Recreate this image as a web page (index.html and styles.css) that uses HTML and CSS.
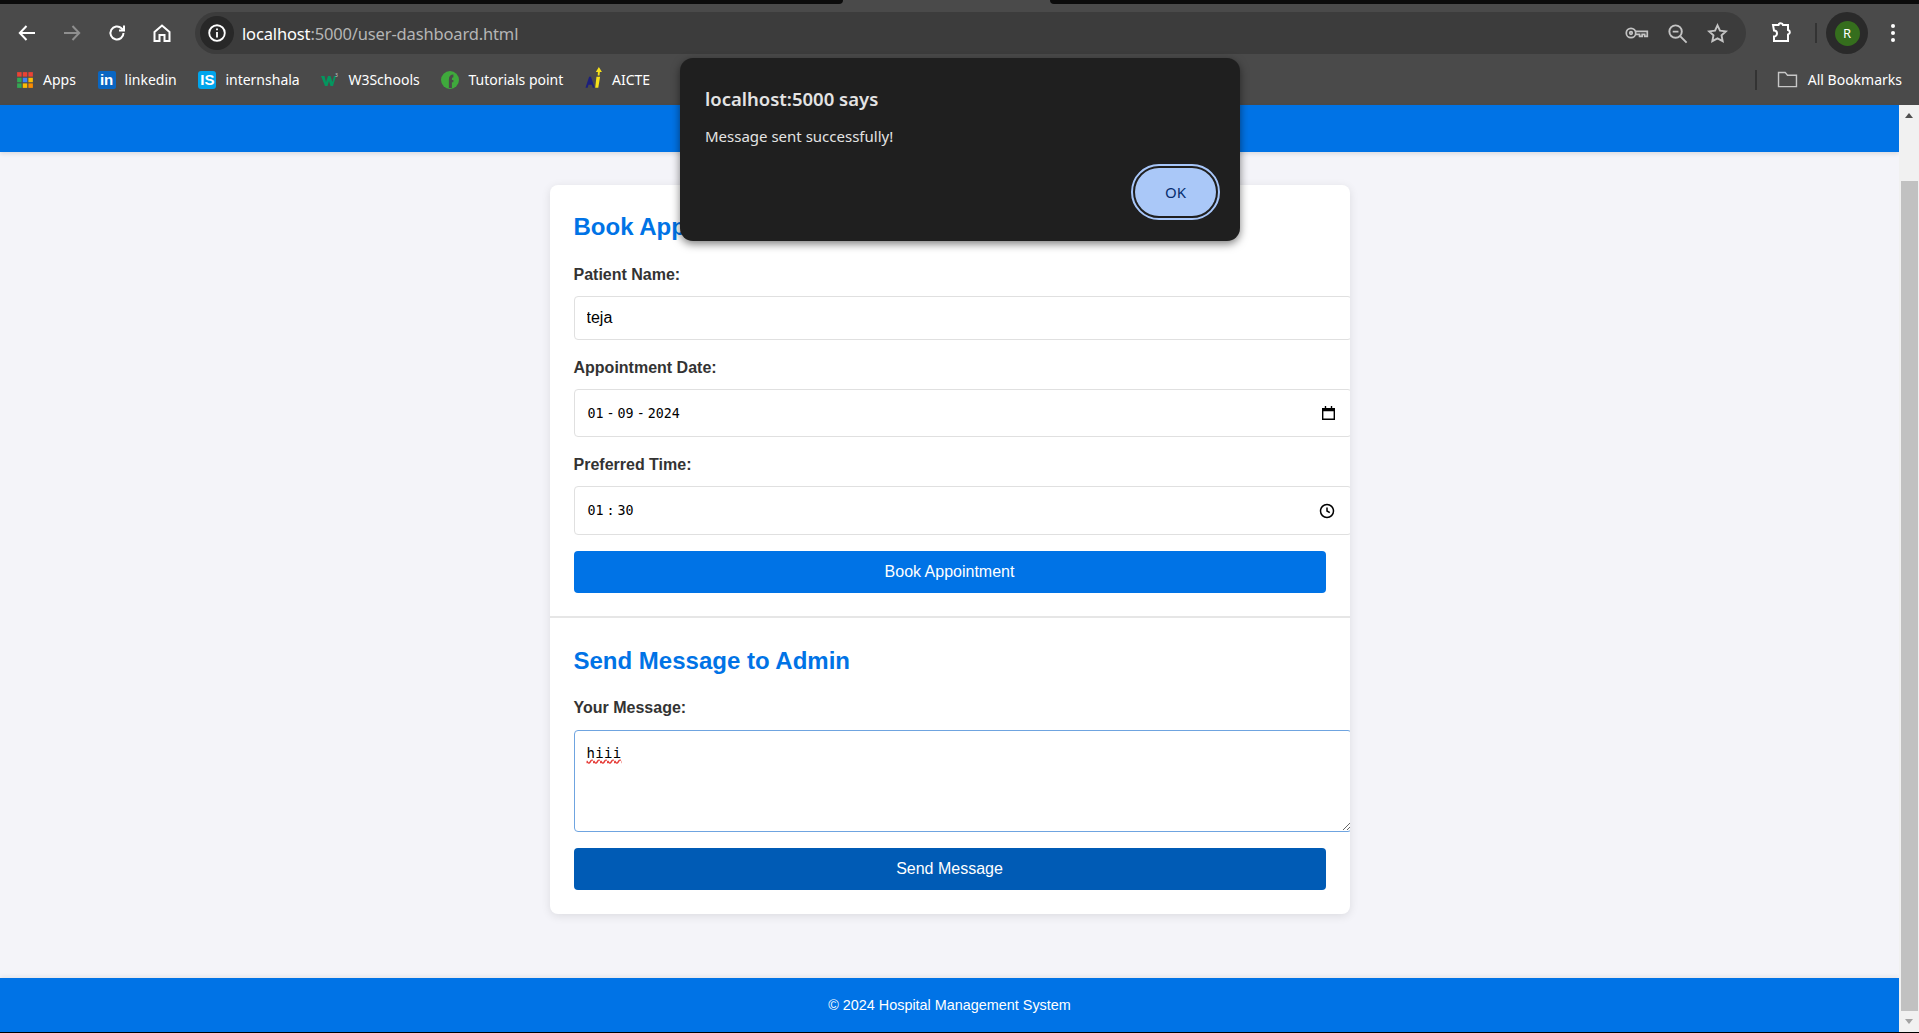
FILE: index.html
```html
<!DOCTYPE html>
<html lang="en">
<head>
    <meta charset="UTF-8">
    <meta name="viewport" content="width=device-width, initial-scale=1.0">
    <title>User Dashboard</title>
    <link rel="stylesheet" href="styles.css">
</head>
<body>

<div class="tabstrip">
    <span class="strip-left"></span>
    <span class="strip-right"></span>
</div>

<div class="toolbar">
    <div class="nav-icons">
        <svg class="nav-icon" viewBox="0 0 24 24"><path d="M20 12H5M11.500 5 4.800 12l6.700 7"/></svg>
        <svg class="nav-icon dim" viewBox="0 0 24 24"><path d="M4 12h15M12.500 5l6.700 7-6.700 7"/></svg>
        <svg class="nav-icon" viewBox="0 0 24 24"><path d="M18.500 12a6.500 6.500 0 1 1-2-4.700L19 9.500M19 4.500v5h-5"/></svg>
        <svg class="nav-icon" viewBox="0 0 24 24"><path d="M4.500 11 12 4.500l7.500 6.500v9h-5v-6h-5v6h-5z"/></svg>
    </div>
    <div class="omnibox">
        <span class="site-info">
            <svg viewBox="0 0 24 24"><circle cx="12" cy="12" r="8.500"/><path d="M12 11v6M12 7v2"/></svg>
        </span>
        <span class="url">localhost<span class="url-rest">:5000/user-dashboard.html</span></span>
        <span class="omni-icons">
            <svg class="omni-icon key" viewBox="0 0 28 16"><circle cx="7" cy="8" r="5.500"/><circle cx="7" cy="8" r="1.500"/><path d="M12.500 6H26v6h-3V9.500h-3V12h-3V9.500h-4.500"/></svg>
            <svg class="omni-icon" viewBox="0 0 24 24"><circle cx="10" cy="10" r="6.500"/><path d="M7 10h6M15 15l6.500 6.500"/></svg>
            <svg class="omni-icon" viewBox="0 0 24 24"><path d="m12 3.500 2.600 5.600 6.100.7-4.500 4.200 1.200 6-5.400-3-5.400 3 1.200-6-4.500-4.200 6.100-.7z"/></svg>
        </span>
    </div>
    <svg class="ext-icon" viewBox="0 0 24 24"><path d="M4 4h5.500a2.300 2.300 0 0 1 4.500 0H19v5a2.300 2.300 0 0 1 0 4.500V20H5v-4.500a2.500 2.500 0 0 0 0-6z"/></svg>
    <span class="tool-divider"></span>
    <span class="avatar-wrap"><span class="avatar">R</span></span>
    <span class="menu-dots"><i></i><i></i><i></i></span>
</div>

<div class="bookmarks">
    <a class="mark">
        <svg class="favicon" viewBox="0 0 16 16">
            <rect x="1" y="1" width="4" height="4" fill="#ea4335"/><rect x="6" y="1" width="4" height="4" fill="#ea4335"/><rect x="11" y="1" width="4" height="4" fill="#ea4335"/>
            <rect x="1" y="6" width="4" height="4" fill="#34a853"/><rect x="6" y="6" width="4" height="4" fill="#4285f4"/><rect x="11" y="6" width="4" height="4" fill="#fbbc04"/>
            <rect x="1" y="11" width="4" height="4" fill="#34a853"/><rect x="6" y="11" width="4" height="4" fill="#fbbc04"/><rect x="11" y="11" width="4" height="4" fill="#fb8c00"/>
        </svg>
        Apps
    </a>
    <a class="mark">
        <span class="fav-box fav-linkedin">in</span>
        linkedin
    </a>
    <a class="mark">
        <span class="fav-box fav-intern">IS</span>
        internshala
    </a>
    <a class="mark">
        <svg class="favicon" viewBox="0 0 18 16"><path d="M0 4h3.500L5 10l2-6h2.500l2 6 1.500-6h2l-3 10H9.500L8 9l-1.500 5H4z" fill="#04965f"/><text x="14" y="5" class="w3-mark">3</text></svg>
        W3Schools
    </a>
    <a class="mark">
        <svg class="favicon" viewBox="0 0 16 16"><circle cx="8" cy="8" r="8" fill="#3fa93c"/><path d="M7 15V7.500C7 4.500 8.500 3 11 3v2.500c-1 0-1.300.6-1.300 2V8H11v2H9.700v5z" fill="#4a4a4a"/></svg>
        Tutorials point
    </a>
    <a class="mark">
        <svg class="favicon fav-large" viewBox="0 0 14 18"><path d="M0 17 3 8h1.500l3 9H6l-.7-2.500H2.500L1.800 17z" fill="#1c1f7c"/><path d="M9 8h3l-1.500 9H8zM11 0l2.500 4h-1.700l-.3 3H10l.2-3H8.500z" fill="#f7e11a"/></svg>
        AICTE
    </a>
    <span class="bar-spacer"></span>
    <span class="tool-divider bm-divider"></span>
    <a class="mark all-marks">
        <svg class="folder" viewBox="0 0 22 18"><path d="M1.500 16.500V1.500h7l2.500 3h9.500v12z"/></svg>
        All Bookmarks
    </a>
</div>

<div class="window">
    <div class="page">
        <header class="site-header"></header>
        <main class="content">
            <div class="card">
                <section class="card-section">
                    <h2>Book Appointment</h2>
                    <form>
                        <label for="patient">Patient Name:</label>
                        <input class="text-input" type="text" id="patient" value="teja">

                        <label>Appointment Date:</label>
                        <div class="picker date-picker">
                            <span class="picker-value"><span>01</span><span class="sep">-</span><span>09</span><span class="sep">-</span><span>2024</span></span>
                            <svg viewBox="0 0 14 15"><path class="solid" d="M3 0h1.500v2h5V0H11v2h3v13H0V2h3zM1.500 5.500v8h11v-8z"/></svg>
                        </div>

                        <label>Preferred Time:</label>
                        <div class="picker time-picker">
                            <span class="picker-value"><span>01</span><span class="sep">:</span><span>30</span></span>
                            <svg viewBox="0 0 16 16"><circle cx="8" cy="8" r="6.500"/><path d="M8 4.500V8l2.800 1.700"/></svg>
                        </div>

                        <button class="btn" type="button">Book Appointment</button>
                    </form>
                </section>

                <section class="card-section message-section">
                    <h2>Send Message to Admin</h2>
                    <form>
                        <label for="message">Your Message:</label>
                        <textarea id="message" spellcheck="false">hiii</textarea>
                        <button class="btn btn-active" type="button">Send Message</button>
                    </form>
                </section>
            </div>
        </main>
        <footer class="site-footer">© 2024 Hospital Management System</footer>
    </div>
    <div class="scrollbar">
        <span class="arrow up"></span>
        <span class="track"><span class="thumb"></span></span>
        <span class="arrow down"></span>
    </div>
</div>

<div class="alert-box">
    <h3>localhost:5000 says</h3>
    <p>Message sent successfully!</p>
    <div class="alert-actions">
        <button class="ok-btn" type="button">OK</button>
    </div>
</div>

</body>
</html>
```

FILE: styles.css
```css
html, body {
    height: 100%;
}
body {
    margin: 0;
    padding: 0;
    height: 1033px;
    overflow: hidden;
    display: flex;
    flex-direction: column;
    background-color: #000;
    font-family: "Liberation Sans", Arial, sans-serif;
    position: relative;
}

/* browser chrome */
.tabstrip {
    height: 4px;
    background-color: #4a4a4a;
    display: flex;
    justify-content: space-between;
}
.strip-left, .strip-right {
    display: block;
    height: 4px;
    background-color: #0b0b0b;
}
.strip-left {
    width: 843px;
    border-bottom-right-radius: 8px;
}
.strip-right {
    width: 869px;
    border-bottom-left-radius: 8px;
}
.toolbar {
    height: 58px;
    background-color: #4a4a4a;
    display: flex;
    align-items: center;
    font-family: "Noto Sans", "Open Sans", sans-serif;
}
.nav-icons {
    display: flex;
    margin-left: 15px;
    gap: 21px;
    width: 172px;
}
.nav-icons svg {
    width: 24px;
    height: 24px;
    fill: none;
    stroke: #fff;
    stroke-width: 2;
}
.nav-icons svg.dim {
    stroke: #8f8f8f;
}
.omnibox {
    width: 1551px;
    margin-left: 8px;
    height: 42px;
    background-color: #3c3c3c;
    border-radius: 21px;
    display: flex;
    align-items: center;
}
.site-info {
    width: 34px;
    height: 34px;
    margin-left: 5px;
    border-radius: 50%;
    background-color: #282828;
    display: flex;
    align-items: center;
    justify-content: center;
}
.site-info svg {
    width: 22px;
    height: 22px;
    fill: none;
    stroke: #fff;
    stroke-width: 2;
}
.url {
    margin-left: 8px;
    font-size: 16.500px;
    letter-spacing: -0.15px;
    color: #fff;
}
.url-rest {
    color: #b5b5b5;
}
.omni-icons {
    margin-left: auto;
    display: flex;
    align-items: center;
    gap: 17px;
    margin-right: 17px;
}
.omni-icons svg {
    width: 23px;
    height: 23px;
    fill: none;
    stroke: #c4c4c4;
    stroke-width: 2;
}
.omni-icons svg.key {
    width: 24px;
    height: 14px;
}
.ext-icon {
    width: 24px;
    height: 24px;
    margin-left: 23px;
    fill: none;
    stroke: #fff;
    stroke-width: 2;
}
.tool-divider {
    width: 2px;
    height: 20px;
    background-color: #333;
    display: block;
    margin-left: 22px;
}
.avatar-wrap {
    width: 42px;
    height: 42px;
    margin-left: 9px;
    border-radius: 50%;
    background-color: #2a2a2a;
    display: flex;
    align-items: center;
    justify-content: center;
}
.avatar {
    width: 25px;
    height: 25px;
    border-radius: 50%;
    background-color: #356e1d;
    color: #fff;
    font-size: 13px;
    line-height: 25px;
    text-align: center;
}
.menu-dots {
    margin-left: 23px;
    display: flex;
    flex-direction: column;
    gap: 3px;
}
.menu-dots i {
    width: 4px;
    height: 4px;
    border-radius: 50%;
    background-color: #fff;
    display: block;
}

.bookmarks {
    height: 35px;
    background-color: #4a4a4a;
    display: flex;
    align-items: center;
    padding-left: 16px;
    padding-bottom: 8px;
    font-family: "Noto Sans", "Open Sans", sans-serif;
    font-size: 14px;
    color: #fff;
}
.mark {
    display: flex;
    align-items: center;
    gap: 9px;
    margin-right: 21.700px;
}
.favicon {
    width: 18px;
    height: 18px;
}
.fav-large {
    height: 22px;
    margin-top: -4px;
}
.fav-box {
    width: 18px;
    height: 18px;
    border-radius: 2px;
    color: #fff;
    font-family: "Liberation Sans", sans-serif;
    font-weight: bold;
    font-size: 15px;
    line-height: 18px;
    text-align: center;
}
.fav-linkedin {
    background-color: #0a66c2;
}
.fav-intern {
    background-color: #00a5ec;
    border-radius: 3px;
}
.w3-mark {
    fill: #ccc;
    font-size: 5px;
}
.bar-spacer {
    flex: 1;
}
.bm-divider {
    height: 20px;
    margin: 0 20px 0 0;
}
.all-marks {
    margin-right: 17px;
    gap: 10px;
}
.folder {
    width: 21px;
    height: 17px;
    fill: none;
    stroke: #c7c7c7;
    stroke-width: 1.500;
}

/* page */
.window {
    flex: 1;
    display: flex;
    min-height: 0;
    margin-bottom: 1px;
}
.page {
    flex: 1;
    display: flex;
    flex-direction: column;
    background-color: #f4f4f9;
    min-width: 0;
}
.site-header {
    height: 47px;
    background-color: #0073e6;
    box-shadow: 0 2px 4px rgba(0, 0, 0, 0.1);
}
.content {
    flex: 1;
    padding-top: 33px;
}
.card {
    width: 800px;
    margin: 0 auto;
    height: 729px;
    background-color: #fff;
    border-radius: 8px;
    box-shadow: 0 2px 10px rgba(0, 0, 0, 0.1);
    overflow: hidden;
}
.card-section {
    padding: 28px 24px 0;
}
.card-section + .card-section {
    border-top: 2px solid #e6e6e6;
    margin-top: 23px;
    padding-top: 29px;
}
h2 {
    margin: 0 0 25px;
    color: #0073e6;
    font-size: 24px;
    line-height: 28px;
}
.message-section h2 {
    margin-bottom: 24px;
}
label {
    display: block;
    font-weight: bold;
    font-size: 16px;
    line-height: 18px;
    color: #333;
    margin-top: 19px;
    margin-bottom: 12px;
}
.text-input, .picker, textarea {
    width: 752px;
    padding: 0 12px;
    border: 1px solid #e0e0e0;
    border-radius: 4px;
    background-color: #fff;
}
.text-input {
    display: block;
    height: 42px;
    font-family: "Liberation Sans", Arial, sans-serif;
    font-size: 16px;
    color: #000;
    outline: none;
}
.picker {
    display: flex;
    align-items: center;
    justify-content: space-between;
}
.date-picker {
    height: 46px;
}
.time-picker {
    height: 47px;
}
.picker-value {
    padding-left: 1px;
    font-family: "DejaVu Sans Mono", monospace;
    font-size: 13.330px;
    color: #000;
}
.sep {
    margin: 0 3px;
}
.date-picker svg {
    width: 13px;
    height: 14px;
    margin-right: 4px;
}
.time-picker svg {
    width: 16px;
    height: 16px;
    margin-right: 4px;
    fill: none;
    stroke: #000;
    stroke-width: 1.500;
}
.solid {
    fill: #000;
}
.btn {
    display: block;
    width: 752px;
    height: 42px;
    margin-top: 16px;
    padding: 0;
    border: 0;
    border-radius: 4px;
    background-color: #0073e6;
    color: #fff;
    font-family: "Liberation Sans", Arial, sans-serif;
    font-size: 16px;
}
.btn-active {
    background-color: #005bb5;
}
.message-section label {
    margin-bottom: 13px;
}
textarea {
    display: block;
    padding-top: 14px;
    padding-bottom: 0;
    height: 86px;
    border-color: #6fa4e0;
    font-family: "DejaVu Sans Mono", monospace;
    font-size: 14px;
    letter-spacing: 0.3px;
    color: #000;
    outline: none;
    text-decoration: underline wavy #e53935;
}
.site-footer {
    height: 54px;
    line-height: 54px;
    background-color: #0073e6;
    color: #fff;
    font-size: 14.400px;
    text-align: center;
    box-shadow: 0 -2px 4px rgba(0, 0, 0, 0.06);
}

.scrollbar {
    width: 20px;
    background-color: #f1f1f1;
    display: flex;
    flex-direction: column;
    align-items: center;
}
.arrow {
    width: 0;
    height: 0;
    border-left: 4.500px solid transparent;
    border-right: 4.500px solid transparent;
    margin: 8px 0;
}
.arrow.up {
    border-bottom: 5px solid #505050;
}
.arrow.down {
    border-top: 5px solid #a3a3a3;
}
.track {
    flex: 1;
    width: 17px;
    padding-top: 55px;
    display: flex;
    box-sizing: border-box;
}
.thumb {
    flex: 1;
    background-color: #c1c1c1;
}

/* alert dialog sits over the page */
.alert-box {
    position: absolute;
    left: 680px;
    top: 58px;
    width: 560px;
    height: 183px;
    box-sizing: border-box;
    padding: 29px 24px 0 25px;
    background-color: #1f1f1f;
    border-radius: 13px;
    box-shadow: 0 3px 8px rgba(0, 0, 0, 0.5);
    font-family: "Noto Sans", "Open Sans", sans-serif;
    color: #e3e3e3;
}
.alert-box h3 {
    margin: 0;
    font-size: 18.500px;
    font-weight: 600;
    line-height: 24px;
}
.alert-box p {
    margin: 15px 0 0;
    font-size: 15px;
    line-height: 20px;
}
.alert-actions {
    display: flex;
    justify-content: flex-end;
    margin-top: 22px;
}
.ok-btn {
    width: 81px;
    height: 48px;
    border: 0;
    padding: 0;
    border-radius: 24px;
    background-color: #aac8f8;
    color: #062e6f;
    font-family: "Noto Sans", "Open Sans", sans-serif;
    font-size: 15px;
    outline: 2px solid #a8c7fa;
    outline-offset: 2px;
}
```
